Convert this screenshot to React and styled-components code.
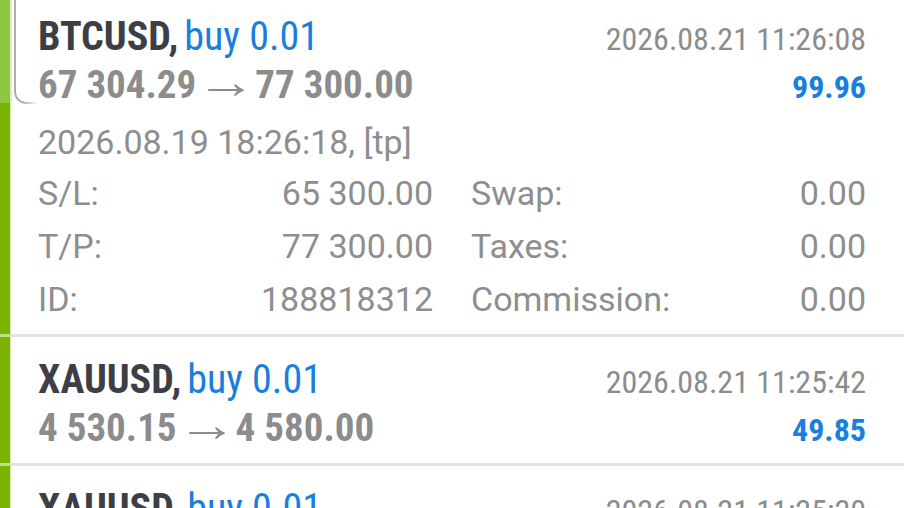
import React from "react";
import styled, { createGlobalStyle } from "styled-components";

const Global = createGlobalStyle`
  html, body { margin: 0; padding: 0; background: #ffffff; }
  body { font-family: Roboto, "Noto Sans", sans-serif; -webkit-font-smoothing: antialiased; }
  #root { height: 508px; overflow: hidden; }
`;

const COND = `"Roboto Condensed", Roboto, sans-serif`;

const List = styled.div`
  margin-top: -6px;
  display: flex;
  flex-direction: column;
`;

const Card = styled.div`
  position: relative;
  display: flex;
`;

const Bar = styled.div`
  width: 10px;
  flex: none;
  background: #7cb300;
  border-right: 1px solid #d6ebad;
  border-bottom: 3px solid #c4df8c;
`;

const Body = styled.div`
  flex: 1;
  min-width: 0;
  padding: 20px 38px ${(p) => (p.$expanded ? "8px" : "16px")} 27px;
  border-bottom: 3px solid #e4e4e4;
`;

const HeadRow = styled.div`
  display: flex;
  justify-content: space-between;
  align-items: baseline;
  height: 45px;
  line-height: 45px;
  font-family: ${COND};
  white-space: nowrap;
`;

const Symbol = styled.span`
  font-size: 40px;
  font-weight: 700;
  color: #3e3e46;
`;

const Side = styled.span`
  margin-left: 6px;
  font-size: 40px;
  font-weight: 400;
  color: #1a7fdc;
`;

const Prices = styled.span`
  font-size: 39px;
  font-weight: 700;
  color: #8c8c8c;
`;

const Arrow = styled.span`
  display: inline-block;
  font-family: "Liberation Sans", sans-serif;
  font-size: 48px;
  line-height: 45px;
  font-weight: 700;
  transform: scaleX(1.25);
  margin: 0 -4px 0 -3px;
`;

const Time = styled.span`
  font-size: 32px;
  font-weight: 400;
  color: #8c8c8c;
`;

const Profit = styled.span`
  font-size: 32px;
  font-weight: 700;
  color: #1a7fdc;
`;

const OpenLine = styled.div`
  margin-top: 13px;
  line-height: 50px;
  font-size: 34px;
  color: #8e8e8e;
  white-space: nowrap;
`;

const Details = styled.div`
  display: grid;
  grid-template-columns: 1fr 1fr;
  column-gap: 38px;
  font-size: 34px;
  line-height: 53px;
  color: #8e8e8e;
`;

const Field = styled.div`
  display: flex;
  justify-content: space-between;
  white-space: nowrap;
`;

const PressGlow = styled.div`
  position: absolute;
  left: 0;
  top: 0;
  width: 10px;
  height: 109px;
  background: #8dc63f;
  border-right: 2px solid #dcefbd;
  pointer-events: none;
`;

const PressOutline = styled.div`
  position: absolute;
  left: 14px;
  top: -10px;
  width: 22px;
  height: 118px;
  border-left: 2px solid #adadad;
  border-bottom: 2px solid #adadad;
  border-bottom-left-radius: 12px;
  -webkit-mask-image: linear-gradient(to right, #000 40%, transparent 100%);
  mask-image: linear-gradient(to right, #000 40%, transparent 100%);
  pointer-events: none;
`;

const trades = [
  {
    symbol: "BTCUSD",
    side: "buy 0.01",
    open: "67 304.29",
    close: "77 300.00",
    time: "2026.08.21 11:26:08",
    profit: "99.96",
    expanded: true,
    opened: "2026.08.19 18:26:18, [tp]",
    rows: [
      ["S/L:", "65 300.00", "Swap:", "0.00"],
      ["T/P:", "77 300.00", "Taxes:", "0.00"],
      ["ID:", "188818312", "Commission:", "0.00"],
    ],
  },
  {
    symbol: "XAUUSD",
    side: "buy 0.01",
    open: "4 530.15",
    close: "4 580.00",
    time: "2026.08.21 11:25:42",
    profit: "49.85",
  },
  {
    symbol: "XAUUSD",
    side: "buy 0.01",
    open: "4 531.40",
    close: "4 580.00",
    time: "2026.08.21 11:25:20",
    profit: "48.60",
  },
];

function Trade({ t, pressed }) {
  return (
    <Card>
      <Bar />
      <Body $expanded={t.expanded}>
        <HeadRow>
          <span>
            <Symbol>{t.symbol},</Symbol>
            <Side>{t.side}</Side>
          </span>
          <Time>{t.time}</Time>
        </HeadRow>
        <HeadRow>
          <Prices>
            {t.open} <Arrow>→</Arrow> {t.close}
          </Prices>
          <Profit>{t.profit}</Profit>
        </HeadRow>
        {t.expanded && (
          <>
            <OpenLine>{t.opened}</OpenLine>
            <Details>
              {t.rows.map((r) => (
                <React.Fragment key={r[0]}>
                  <Field>
                    <span>{r[0]}</span>
                    <span>{r[1]}</span>
                  </Field>
                  <Field>
                    <span>{r[2]}</span>
                    <span>{r[3]}</span>
                  </Field>
                </React.Fragment>
              ))}
            </Details>
          </>
        )}
      </Body>
      {pressed && (
        <>
          <PressGlow />
          <PressOutline />
        </>
      )}
    </Card>
  );
}

export default function App() {
  return (
    <>
      <Global />
      <List>
        {trades.map((t, i) => (
          <Trade key={i} t={t} pressed={i === 0} />
        ))}
      </List>
    </>
  );
}
